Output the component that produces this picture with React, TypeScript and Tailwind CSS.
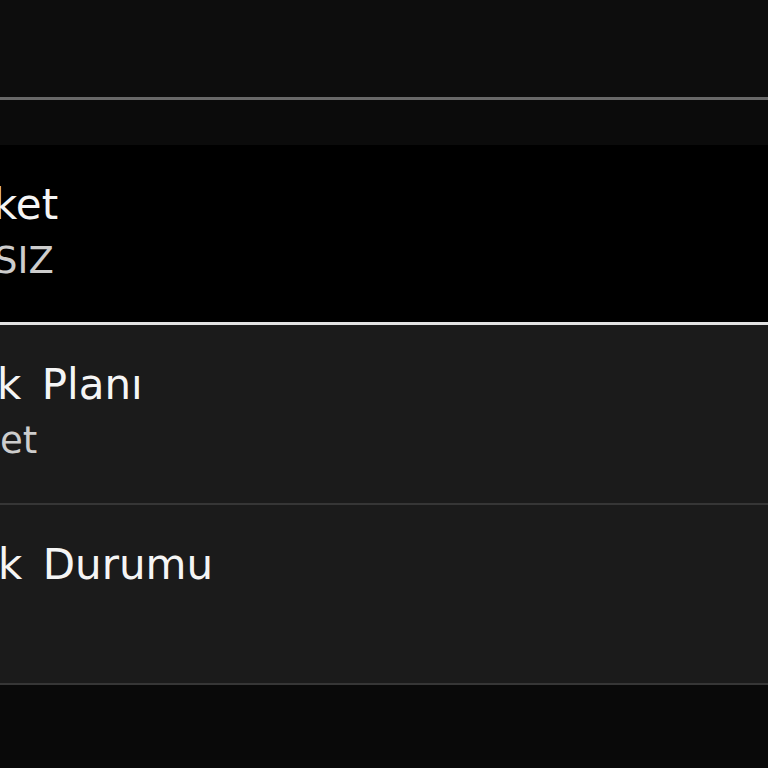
import React from "react";

type Row = { label: string; value?: string; active?: boolean; labelShift: string; valueShift: string };

const rows: Row[] = [
  { label: "ket", value: "SIZ", active: true, labelShift: "-ml-[7px]", valueShift: "-ml-[6px]" },
  { label: "k Planı", value: "et", labelShift: "-ml-[3px] [word-spacing:7px]", valueShift: "ml-0" },
  { label: "k Durumu", labelShift: "-ml-[2px] [word-spacing:7px]", valueShift: "ml-0" },
];

const SettingsRow = ({ row }: { row: Row }) => {
  return (
    <div
      className={
        row.active
          ? "h-[180px] bg-black border-b-[3px] border-[#e2e2e2] pt-[33px]"
          : "h-[180px] bg-[#1b1b1b] border-b-2 border-[#363636] pt-[33px]"
      }
    >
      <div className="flex flex-col gap-[2px]">
        <span className={`${row.labelShift} text-[42px] leading-[54px] text-[#f5f5f5] whitespace-nowrap`}>{row.label}</span>
        {row.value && <span className={`${row.valueShift} text-[37px] leading-[54px] text-[#cdcdcd] whitespace-nowrap`}>{row.value}</span>}
      </div>
    </div>
  );
};

export default function App() {
  return (
    <div className="w-[768px] h-[768px] overflow-hidden bg-[#090909]" style={{ fontFamily: '"DejaVu Sans", "Noto Sans", sans-serif' }}>
      <div className="h-[100px] bg-[#0d0d0d] border-b-[3px] border-[#686868]" />
      <div className="h-[45px] bg-[#0b0b0b]" />
      <div className="flex flex-col">
        {rows.map((row) => (
          <SettingsRow key={row.label} row={row} />
        ))}
      </div>
    </div>
  );
}
